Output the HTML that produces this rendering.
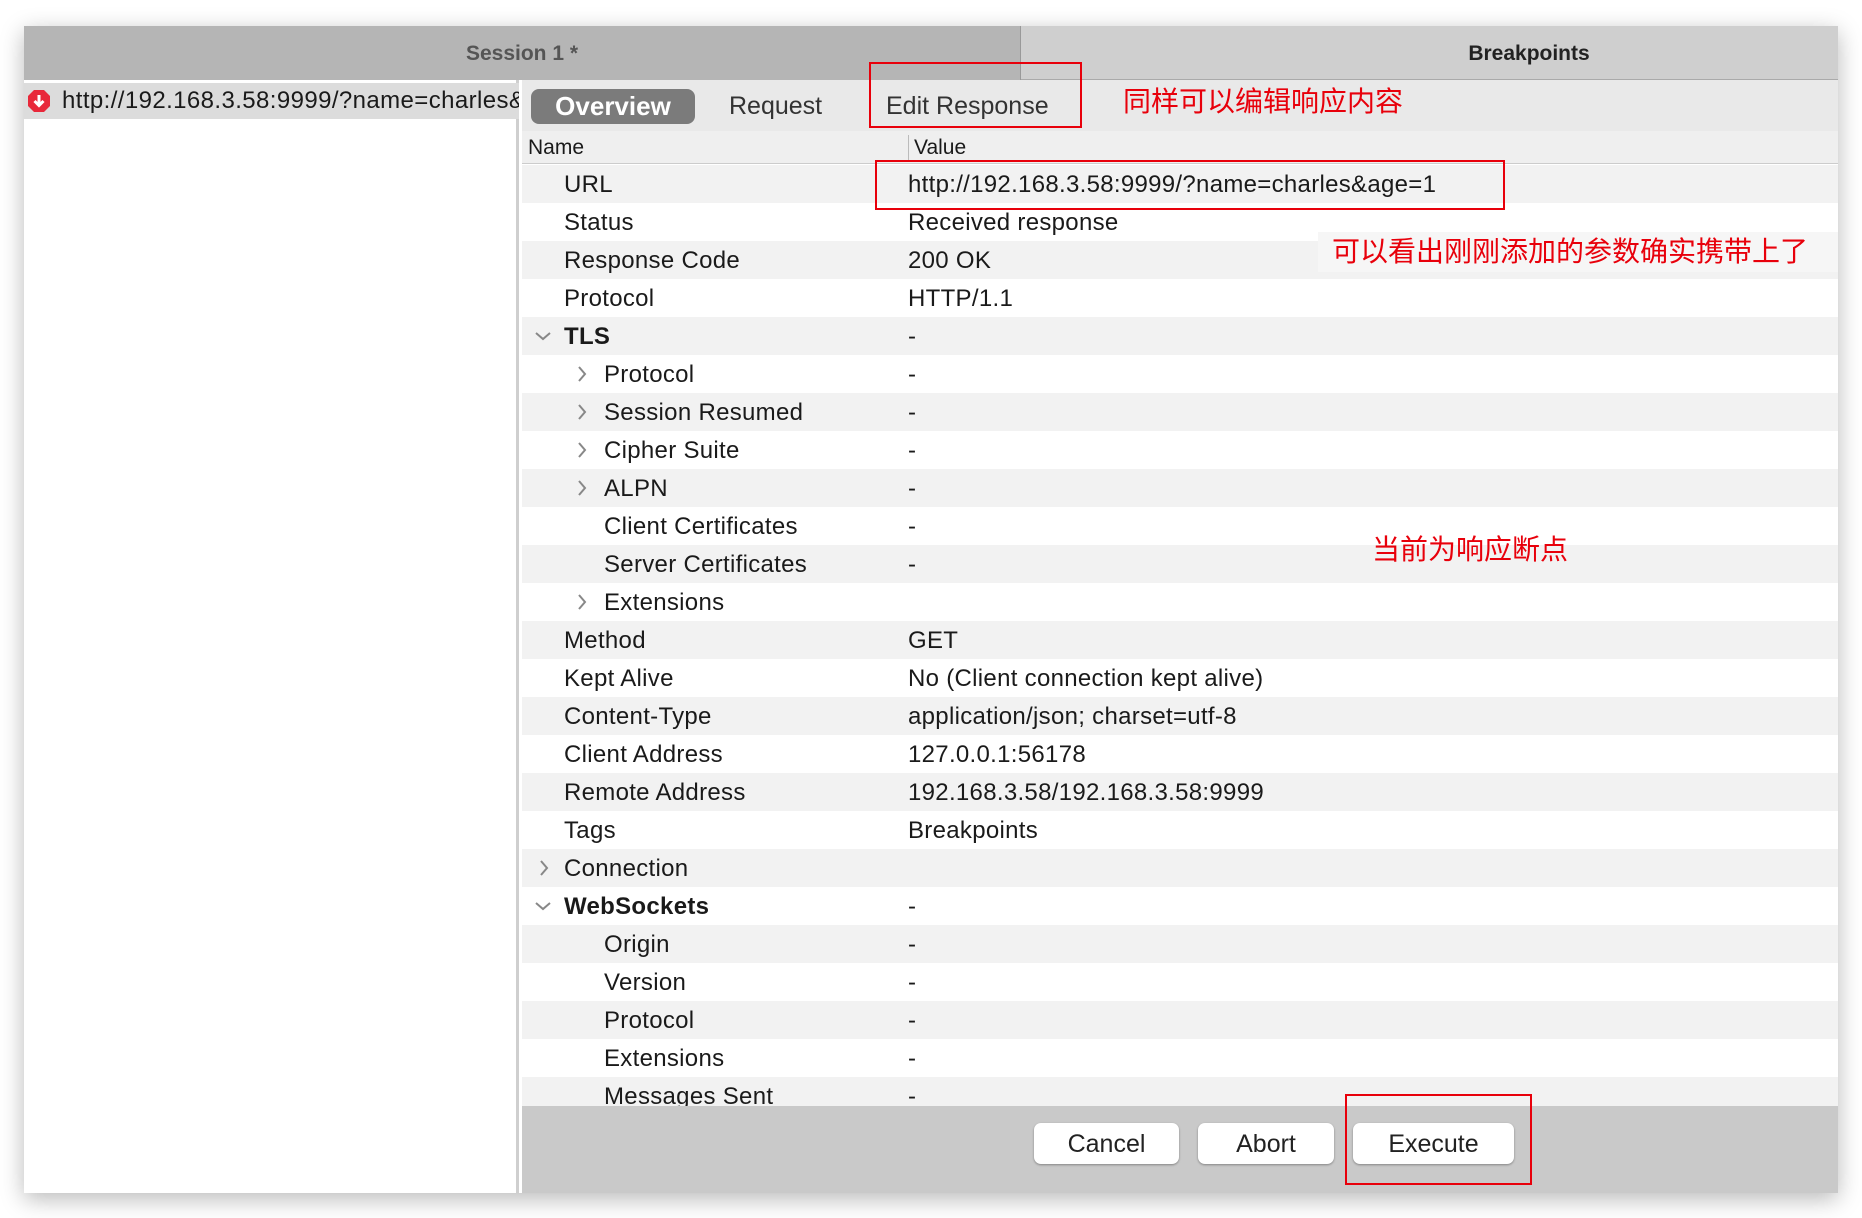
<!DOCTYPE html>
<html><head><meta charset="utf-8"><style>
*{margin:0;padding:0;box-sizing:border-box}
body{width:1862px;height:1218px;background:#fff;position:relative;overflow:hidden;font-family:"Liberation Sans","Noto Sans CJK SC",sans-serif;color:#1a1a1a}
.win{position:absolute;left:24px;top:26px;width:1814px;height:1167px;background:#fff;box-shadow:0 6px 22px rgba(0,0,0,.28)}
.abs{position:absolute}
.tabs{left:0;top:0;width:1814px;height:54px;background:#cfcfcf;border-bottom:1px solid #aaa}
.t1{left:0;top:0;width:997px;height:54px;background:#b5b5b5;border-right:1px solid #999;text-align:center;line-height:56px;font-size:21px;font-weight:bold;color:#555}
.t2{left:1420px;top:0;width:170px;height:54px;text-align:center;line-height:56px;font-size:21px;font-weight:bold;color:#222}
.left{left:0;top:54px;width:495px;height:1113px;background:#fff;border-right:3px solid #cfcfcf}
.sel{left:0;top:3px;width:495px;height:36px;background:#dcdcdc;font-size:24px;line-height:36px;padding-left:38px;white-space:nowrap;overflow:hidden;letter-spacing:.4px}
.right{left:498px;top:54px;width:1316px;height:1113px;background:#fff}
.tb{left:0;top:0;width:1316px;height:51px;background:#e9e9e9}
.tab{top:9px;height:35px;line-height:35px;font-size:25px;color:#333}
.ov{left:9px;width:164px;background:#7b7b7b;color:#fff;border-radius:8px;text-align:center;font-weight:bold}
.hd{left:0;top:51px;width:1316px;height:33px;background:#efefef;border-bottom:1px solid #ccc;font-size:21px;line-height:34px}
.rows{left:0;top:85px;width:1316px;height:941px;overflow:hidden}
.r{height:38px;font-size:24px;line-height:40px;position:relative;white-space:nowrap;letter-spacing:.3px}
.r:nth-child(odd){background:#f2f2f2}
.r span,.r svg{position:absolute}
.n{left:42px}.n2{left:82px}.v{left:386px}
.cd{left:12px;top:13px}.cr{left:54px;top:10px}.cr0{left:16px;top:10px}
.bot{left:0;top:1026px;width:1316px;height:87px;background:#c9c9c9}
.btn{top:17px;height:41px;background:#fff;border-radius:7px;box-shadow:0 1px 2px rgba(0,0,0,.35);text-align:center;line-height:42px;font-size:25px;color:#222}
.box{position:absolute;border:2px solid #e8000b}
.red{position:absolute;color:#e8000b;font-size:28px;white-space:nowrap}
</style></head><body>
<div class="win">
<div class="abs tabs"><div class="abs t1">Session 1 *</div><div class="abs t2">Breakpoints</div></div>
<div class="abs left"><div class="abs sel"><svg class="abs" style="left:3px;top:6px" width="24" height="24" viewBox="0 0 24 24"><polygon points="7,1 17,1 23,7 23,17 17,23 7,23 1,17 1,7" fill="#e8283a"/><path d="M12 6v10M7.5 12l4.5 4.5 4.5-4.5" stroke="#fff" stroke-width="3" fill="none"/></svg>http://192.168.3.58:9999/?name=charles&amp;age=1</div></div>
<div class="abs right">
<div class="abs tb"><div class="abs tab ov" style="font-size:26px">Overview</div><div class="abs tab" style="left:207px">Request</div><div class="abs tab" style="left:364px">Edit Response</div></div>
<div class="abs hd"><span class="abs" style="left:6px">Name</span><span class="abs" style="left:386px;top:4px;height:25px;border-left:1px solid #bbb"></span><span class="abs" style="left:392px">Value</span></div>
<div class="abs rows">
<div class="r"><span class="n">URL</span><span class="v">http://192.168.3.58:9999/?name=charles&amp;age=1</span></div>
<div class="r"><span class="n">Status</span><span class="v">Received response</span></div>
<div class="r"><span class="n">Response Code</span><span class="v">200 OK</span></div>
<div class="r"><span class="n">Protocol</span><span class="v">HTTP/1.1</span></div>
<div class="r"><svg class="cd" width="18" height="12" viewBox="0 0 18 12"><path d="M2 3l7 6 7-6" stroke="#888" stroke-width="2" fill="none"/></svg><span class="n" style="font-weight:bold">TLS</span><span class="v">-</span></div>
<div class="r"><svg class="cr" width="12" height="18" viewBox="0 0 12 18"><path d="M3 2l6 7-6 7" stroke="#888" stroke-width="2" fill="none"/></svg><span class="n2">Protocol</span><span class="v">-</span></div>
<div class="r"><svg class="cr" width="12" height="18" viewBox="0 0 12 18"><path d="M3 2l6 7-6 7" stroke="#888" stroke-width="2" fill="none"/></svg><span class="n2">Session Resumed</span><span class="v">-</span></div>
<div class="r"><svg class="cr" width="12" height="18" viewBox="0 0 12 18"><path d="M3 2l6 7-6 7" stroke="#888" stroke-width="2" fill="none"/></svg><span class="n2">Cipher Suite</span><span class="v">-</span></div>
<div class="r"><svg class="cr" width="12" height="18" viewBox="0 0 12 18"><path d="M3 2l6 7-6 7" stroke="#888" stroke-width="2" fill="none"/></svg><span class="n2">ALPN</span><span class="v">-</span></div>
<div class="r"><span class="n2">Client Certificates</span><span class="v">-</span></div>
<div class="r"><span class="n2">Server Certificates</span><span class="v">-</span></div>
<div class="r"><svg class="cr" width="12" height="18" viewBox="0 0 12 18"><path d="M3 2l6 7-6 7" stroke="#888" stroke-width="2" fill="none"/></svg><span class="n2">Extensions</span></div>
<div class="r"><span class="n">Method</span><span class="v">GET</span></div>
<div class="r"><span class="n">Kept Alive</span><span class="v">No (Client connection kept alive)</span></div>
<div class="r"><span class="n">Content-Type</span><span class="v">application/json; charset=utf-8</span></div>
<div class="r"><span class="n">Client Address</span><span class="v">127.0.0.1:56178</span></div>
<div class="r"><span class="n">Remote Address</span><span class="v">192.168.3.58/192.168.3.58:9999</span></div>
<div class="r"><span class="n">Tags</span><span class="v">Breakpoints</span></div>
<div class="r"><svg class="cr0" width="12" height="18" viewBox="0 0 12 18"><path d="M3 2l6 7-6 7" stroke="#888" stroke-width="2" fill="none"/></svg><span class="n">Connection</span></div>
<div class="r"><svg class="cd" width="18" height="12" viewBox="0 0 18 12"><path d="M2 3l7 6 7-6" stroke="#888" stroke-width="2" fill="none"/></svg><span class="n" style="font-weight:bold">WebSockets</span><span class="v">-</span></div>
<div class="r"><span class="n2">Origin</span><span class="v">-</span></div>
<div class="r"><span class="n2">Version</span><span class="v">-</span></div>
<div class="r"><span class="n2">Protocol</span><span class="v">-</span></div>
<div class="r"><span class="n2">Extensions</span><span class="v">-</span></div>
<div class="r"><span class="n2">Messages Sent</span><span class="v">-</span></div>
</div>
<div class="abs bot"><div class="abs btn" style="left:512px;width:145px">Cancel</div><div class="abs btn" style="left:676px;width:136px">Abort</div><div class="abs btn" style="left:831px;width:161px">Execute</div></div>
</div>
</div>
<div class="box" style="left:869px;top:62px;width:213px;height:66px"></div>
<div class="box" style="left:875px;top:160px;width:630px;height:50px"></div>
<div class="box" style="left:1345px;top:1094px;width:187px;height:91px"></div>
<div class="red" style="left:1123px;top:80px">同样可以编辑响应内容</div>
<div class="abs" style="left:1318px;top:232px;width:520px;height:40px;background:#f6f6f6"></div>
<div class="red" style="left:1332px;top:230px">可以看出刚刚添加的参数确实携带上了</div>
<div class="red" style="left:1372px;top:528px">当前为响应断点</div>
</body></html>
